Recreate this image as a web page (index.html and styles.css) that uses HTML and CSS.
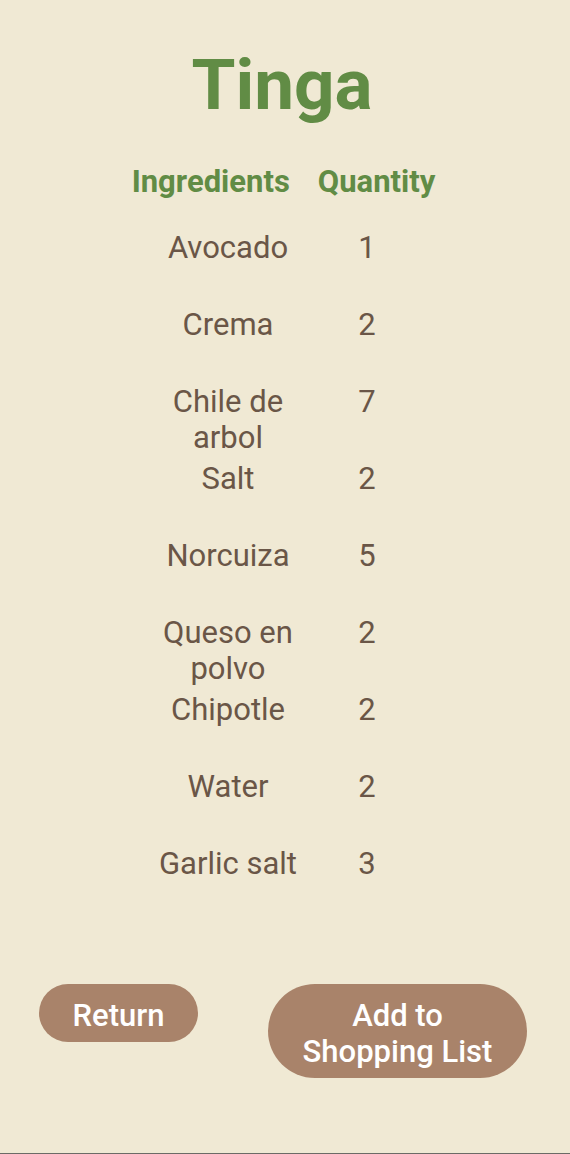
FILE: index.html
```html
<!DOCTYPE html>
<html>
<head>
<meta charset="utf-8">
<link rel="stylesheet" href="styles.css">
</head>
<body>
<div class="screen">
  <h1 class="title">Tinga</h1>
  <div class="header-row">
    <span class="head">Ingredients</span>
    <span class="head">Quantity</span>
  </div>
  <div class="table">
    <div class="row"><div class="name">Avocado</div><div class="qty">1</div></div>
    <div class="row"><div class="name">Crema</div><div class="qty">2</div></div>
    <div class="row"><div class="name">Chile de arbol</div><div class="qty">7</div></div>
    <div class="row"><div class="name">Salt</div><div class="qty">2</div></div>
    <div class="row"><div class="name">Norcuiza</div><div class="qty">5</div></div>
    <div class="row"><div class="name">Queso en polvo</div><div class="qty">2</div></div>
    <div class="row"><div class="name">Chipotle</div><div class="qty">2</div></div>
    <div class="row"><div class="name">Water</div><div class="qty">2</div></div>
    <div class="row"><div class="name">Garlic salt</div><div class="qty">3</div></div>
  </div>
  <div class="actions">
    <button class="btn btn-return">Return</button>
    <button class="btn btn-add">Add to Shopping List</button>
  </div>
</div>
</body>
</html>
```
FILE: styles.css
```css
html, body {
  margin: 0;
  padding: 0;
  background: #F0E9D4;
}
body {
  font-family: Roboto, "Noto Sans", sans-serif;
}
.screen {
  box-sizing: border-box;
  height: 1154px;
  border-bottom: 1px solid #6b6b66;
  display: flex;
  flex-direction: column;
  padding-top: 43px;
}
.title {
  margin: 0;
  text-align: center;
  font-size: 71px;
  line-height: 84px;
  font-weight: 700;
  color: #618C45;
  padding-right: 6px;
}
.header-row {
  margin-top: 37px;
  display: flex;
  justify-content: center;
  gap: 28px;
  padding-right: 3px;
}
.head {
  font-size: 31px;
  line-height: 36px;
  font-weight: 700;
  color: #618C45;
}
.table {
  margin-top: 30px;
  display: flex;
  flex-direction: column;
  padding-left: 150px;
}
.row {
  display: flex;
  height: 77px;
  font-size: 31px;
  line-height: 36px;
  color: #6A5647;
}
.name {
  width: 156px;
  text-align: center;
}
.qty {
  width: 60px;
  margin-left: 31px;
  text-align: center;
}
.actions {
  margin-top: 61px;
  display: flex;
  justify-content: space-between;
  align-items: flex-start;
  padding: 0 43px 0 39px;
}
.btn {
  box-sizing: border-box;
  border: none;
  border-radius: 50px;
  background: #A9836A;
  color: #ffffff;
  font-family: Roboto, "Noto Sans", sans-serif;
  font-size: 31px;
  line-height: 36px;
  font-weight: 500;
  padding: 14px 20px 8px;
  text-align: center;
}
.btn-return {
  width: 159px;
}
.btn-add {
  width: 259px;
}
```
